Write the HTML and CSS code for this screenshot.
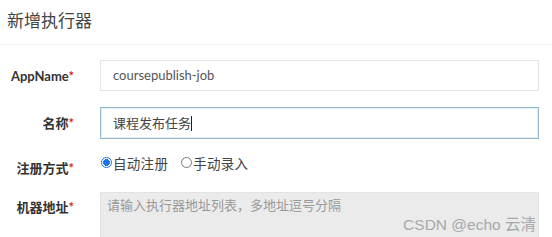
FILE: index.html
```html
<!DOCTYPE html>
<html>
	<head>
		<meta charset="utf-8" />
		<title>新增执行器</title>
		<link rel="stylesheet" href="styles.css">
	</head>
	<body>
		<div class="modal-header">
			<h4 class="modal-title">新增执行器</h4>
		</div>
		<div class="modal-body">
			<div class="form-row">
				<label class="row-label line-31">AppName<i>*</i></label>
				<div class="field">
					<div class="text-input">coursepublish-job</div>
				</div>
			</div>
			<div class="form-row">
				<label class="row-label line-32">名称<i>*</i></label>
				<div class="field">
					<div class="text-input focus">课程发布任务<span class="caret"></span></div>
				</div>
			</div>
			<div class="form-row">
				<label class="row-label pad-top">注册方式<i>*</i></label>
				<div class="field radios">
					<span class="radio checked"></span><span class="radio-text">自动注册</span>
					<span class="radio"></span><span class="radio-text">手动录入</span>
				</div>
			</div>
			<div class="form-row">
				<label class="row-label pad-top">机器地址<i>*</i></label>
				<div class="field">
					<div class="text-area">
						<span class="placeholder">请输入执行器地址列表，多地址逗号分隔</span>
						<span class="watermark">CSDN @echo 云清</span>
					</div>
				</div>
			</div>
		</div>
	</body>
</html>
```

FILE: styles.css
```css
body {
	margin: 0;
	background-color: #fff;
	font-family: Lato, "Noto Sans CJK SC", sans-serif;
	color: #333;
}
.modal-header {
	height: 45px;
	border-bottom: 1px solid #f0f0f0;
	padding-left: 7px;
	box-sizing: border-box;
}
.modal-title {
	margin: 0;
	padding-top: 8px;
	font-size: 17px;
	line-height: 26px;
	font-weight: normal;
	color: #444;
}
.modal-body {
	padding-top: 15px;
}
.form-row {
	display: flex;
	margin-bottom: 14px;
}
.row-label {
	width: 74px;
	margin-right: 26px;
	text-align: right;
	font-size: 13px;
	font-weight: 700;
	color: #333;
	line-height: 20px;
}
.row-label i {
	font-style: normal;
	color: #d9262c;
}
.line-31 {
	line-height: 33px;
}
.line-32 {
	line-height: 32px;
}
.pad-top {
	padding-top: 5px;
}
.field {
	width: 439px;
}
.text-input {
	height: 31px;
	box-sizing: border-box;
	border: 1px solid #e3e3e3;
	padding-left: 12px;
	font-size: 13px;
	line-height: 29px;
	color: #555;
}
.text-input.focus {
	height: 32px;
	line-height: 30px;
	border-color: #96b9cd;
	box-shadow: inset 0 0 0 1px #e2eef5;
	color: #444;
}
.caret {
	display: inline-block;
	width: 1px;
	height: 15px;
	background-color: #222;
	vertical-align: -3px;
}
.radios {
	display: flex;
	align-items: center;
	height: 17px;
	padding-top: 1px;
	font-size: 13.5px;
	color: #444;
}
.radio {
	width: 11px;
	height: 11px;
	box-sizing: border-box;
	border: 1px solid #777;
	border-radius: 50%;
	margin-left: 1px;
}
.radio.checked {
	border: 1px solid #1a73e8;
	background: radial-gradient(circle, #1a73e8 0 3.2px, #fff 3.6px);
}
.radio-text {
	margin-left: 1px;
	margin-right: 12px;
	font-weight: normal;
	letter-spacing: 0.3px;
}
.text-area {
	position: relative;
	height: 70px;
	box-sizing: border-box;
	background-color: #ebebeb;
	border: 1px solid #e3e3e3;
	padding: 2px 6px;
	font-size: 13px;
	line-height: 20px;
}
.placeholder {
	color: #999;
}
.watermark {
	position: absolute;
	right: 2px;
	top: 22px;
	font-family: "Liberation Sans", "Noto Sans CJK SC", sans-serif;
	font-size: 15.5px;
	color: #a8a8a8;
}
```
